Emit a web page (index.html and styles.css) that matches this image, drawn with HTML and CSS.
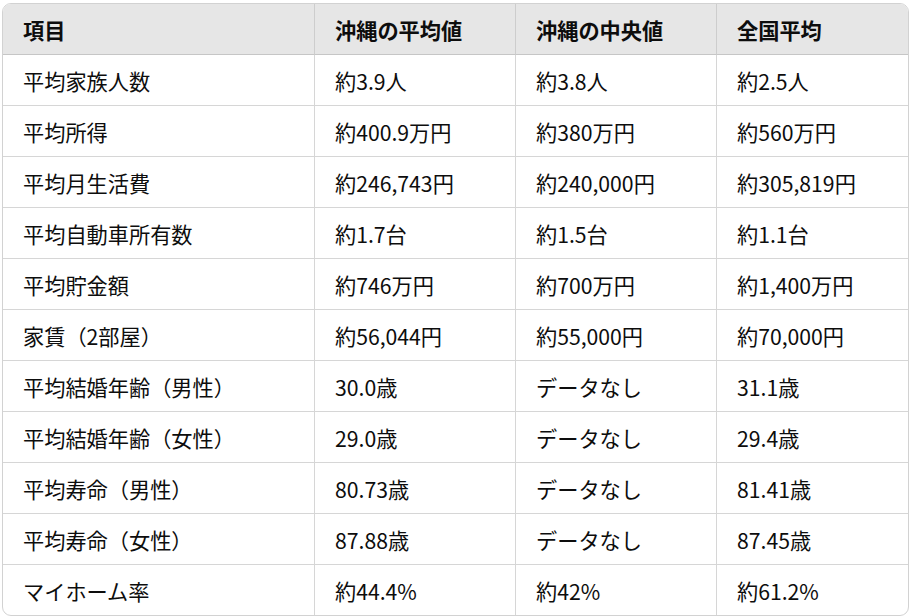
FILE: index.html
```html
<!DOCTYPE html>
<html lang="ja">
<head>
<meta charset="utf-8">
<link rel="stylesheet" href="styles.css">
</head>
<body>
<div class="wrap">
<table class="data">
<colgroup><col class="c1"><col class="c2"><col class="c3"><col class="c4"></colgroup>
<thead>
<tr><th>項目</th><th>沖縄の平均値</th><th>沖縄の中央値</th><th>全国平均</th></tr>
</thead>
<tbody>
<tr><td>平均家族人数</td><td>約3.9人</td><td>約3.8人</td><td>約2.5人</td></tr>
<tr><td>平均所得</td><td>約400.9万円</td><td>約380万円</td><td>約560万円</td></tr>
<tr><td>平均月生活費</td><td>約246,743円</td><td>約240,000円</td><td>約305,819円</td></tr>
<tr><td>平均自動車所有数</td><td>約1.7台</td><td>約1.5台</td><td>約1.1台</td></tr>
<tr><td>平均貯金額</td><td>約746万円</td><td>約700万円</td><td>約1,400万円</td></tr>
<tr><td>家賃（2部屋）</td><td>約56,044円</td><td>約55,000円</td><td>約70,000円</td></tr>
<tr><td>平均結婚年齢（男性）</td><td>30.0歳</td><td>データなし</td><td>31.1歳</td></tr>
<tr><td>平均結婚年齢（女性）</td><td>29.0歳</td><td>データなし</td><td>29.4歳</td></tr>
<tr><td>平均寿命（男性）</td><td>80.73歳</td><td>データなし</td><td>81.41歳</td></tr>
<tr><td>平均寿命（女性）</td><td>87.88歳</td><td>データなし</td><td>87.45歳</td></tr>
<tr><td>マイホーム率</td><td>約44.4%</td><td>約42%</td><td>約61.2%</td></tr>
</tbody>
</table>
</div>
</body>
</html>
```
FILE: styles.css
```css
html, body {
  margin: 0;
  padding: 0;
  background: #ffffff;
}
body {
  padding: 3px 8px 0 2px;
  font-family: "Noto Sans CJK JP", "Noto Sans", sans-serif;
  font-size: 21.2px;
  color: #0d0d0d;
}
.wrap {
  width: 907px;
  box-sizing: border-box;
  border: 1px solid #d2d2d2;
  border-radius: 9px;
  overflow: hidden;
}
.data {
  width: 100%;
  border-collapse: separate;
  border-spacing: 0;
  table-layout: fixed;
}
.c1 { width: 312px; }
.c2 { width: 201px; }
.c3 { width: 201px; }
.data th,
.data td {
  height: 51px;
  box-sizing: border-box;
  padding: 0 0 0 20px;
  text-align: left;
  vertical-align: middle;
  border-bottom: 1px solid #d6d6d6;
  border-right: 1px solid #d6d6d6;
  white-space: nowrap;
  line-height: 1;
}
.data th:last-child,
.data td:last-child {
  border-right: none;
}
.data tbody tr:last-child td {
  border-bottom: none;
  height: 50px;
}
.data th {
  background: #e6e6e6;
  font-weight: 700;
  border-bottom-color: #c6c6c6;
  border-right-color: #cdcdcd;
  padding-top: 2px;
}
.data td {
  padding-top: 2px;
}
```
